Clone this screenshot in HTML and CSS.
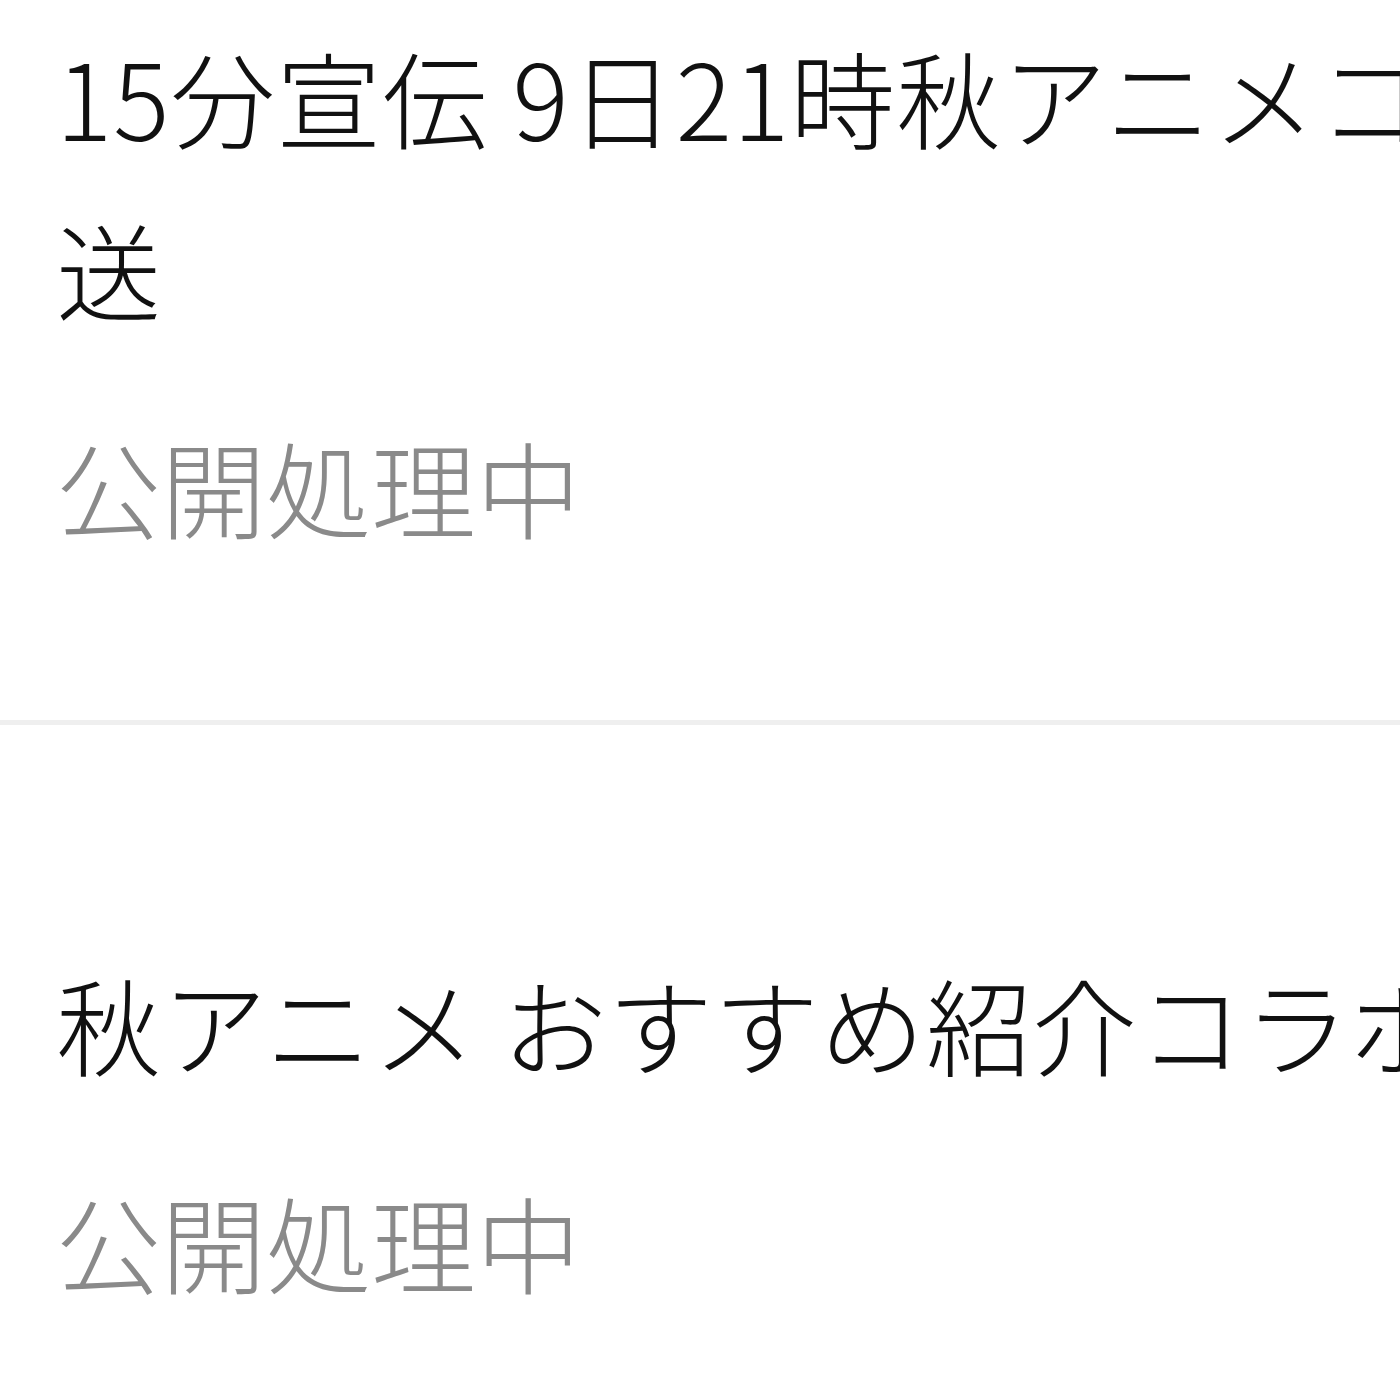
FILE: index.html
```html
<!DOCTYPE html>
<html lang="ja">
<head>
<meta charset="utf-8">
<title>動画一覧</title>
<link rel="stylesheet" href="styles.css">
</head>
<body>
<ul class="video-list">
  <li class="video-item">
    <p class="video-title">15分宣伝 9日21時秋アニメコラボ生放送</p>
    <p class="video-status">公開処理中</p>
  </li>
  <li class="video-item">
    <p class="video-title">秋アニメ おすすめ紹介コラボ企画</p>
    <p class="video-status">公開処理中</p>
  </li>
</ul>
</body>
</html>
```

FILE: styles.css
```css
html, body {
  margin: 0;
  padding: 0;
  background: #ffffff;
  overflow: hidden;
}

body {
  font-family: "Noto Sans CJK JP", "Noto Sans", sans-serif;
  font-weight: 300;
}

.video-list {
  list-style: none;
  margin: 0;
  padding: 0;
  width: 1972px;
}

.video-item {
  display: flex;
  flex-direction: column;
  gap: 62px;
  padding: 211px 56px 165px;
  border-bottom: 5px solid #efefef;
}

.video-item:first-child {
  padding-top: 9px;
}

.video-title {
  margin: 0;
  font-size: 105px;
  line-height: 172px;
  letter-spacing: 1px;
  color: #111111;
}

.video-status {
  margin: 0;
  font-size: 105px;
  line-height: 140px;
  color: #8a8a8a;
}
```
